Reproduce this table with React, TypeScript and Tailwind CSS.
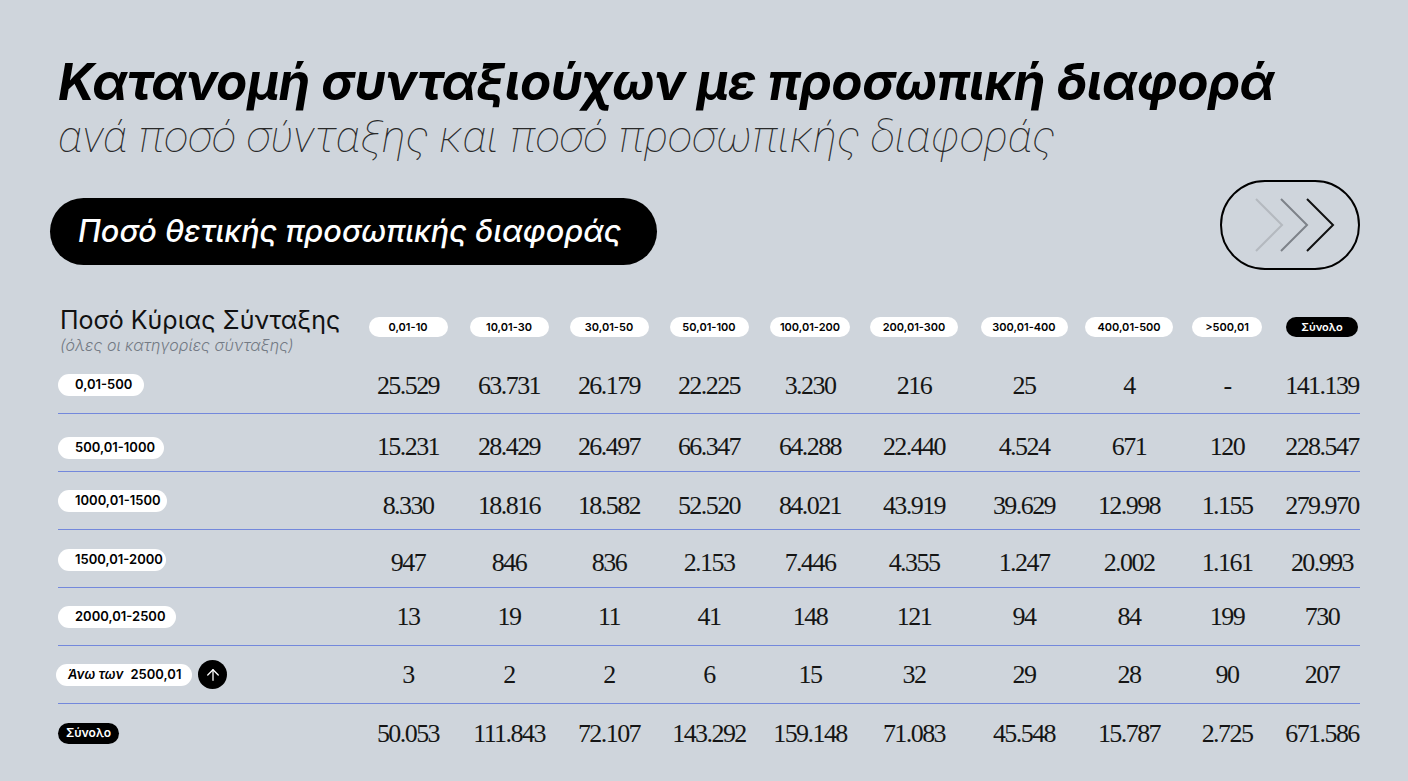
import { ArrowUp } from 'lucide-react';

const cols = ['0,01-10', '10,01-30', '30,01-50', '50,01-100', '100,01-200', '200,01-300', '300,01-400', '400,01-500', '>500,01'];
const colPillW = ['w-[79px]', 'w-[79px]', 'w-[79px]', 'w-[79px]', 'w-[80px]', 'w-[88px]', 'w-[87px]', 'w-[88px]', 'w-[70px]'];

// nudge: some rows in the source sit a few px lower than centre
const rows = [
  { label: '0,01-500', w: 'w-[86px]', nudge: 'pt-[2px]', lnudge: 'pt-0', values: ['25.529', '63.731', '26.179', '22.225', '3.230', '216', '25', '4', '-', '141.139'] },
  { label: '500,01-1000', w: 'w-[106px]', nudge: 'pt-[8px]', lnudge: 'pt-[10px]', values: ['15.231', '28.429', '26.497', '66.347', '64.288', '22.440', '4.524', '671', '120', '228.547'] },
  { label: '1000,01-1500', w: 'w-[109px]', nudge: 'pt-[9px]', lnudge: 'pt-0', values: ['8.330', '18.816', '18.582', '52.520', '84.021', '43.919', '39.629', '12.998', '1.155', '279.970'] },
  { label: '1500,01-2000', w: 'w-[108px]', nudge: 'pt-[7px]', lnudge: 'pt-[3px]', values: ['947', '846', '836', '2.153', '7.446', '4.355', '1.247', '2.002', '1.161', '20.993'] },
  { label: '2000,01-2500', w: 'w-[118px]', nudge: 'pt-0', lnudge: 'pt-0', values: ['13', '19', '11', '41', '148', '121', '94', '84', '199', '730'] },
];

const lastRow = ['3', '2', '2', '6', '15', '32', '29', '28', '90', '207'];
const totals = ['50.053', '111.843', '72.107', '143.292', '159.148', '71.083', '45.548', '15.787', '2.725', '671.586'];

const grid = 'grid grid-cols-[300px_100px_102px_98px_102px_100px_108px_112px_98px_98px_92px]';

function Num({ v, nudge }: { v: string; nudge: string }) {
  return (
    <div className={`${nudge} text-center font-['Liberation_Serif',serif] text-[26px] tracking-[-0.06em] text-[#151515]`}>{v}</div>
  );
}

function Row({ label, values, last, nudge = 'pt-0', lnudge = 'pt-0' }: { label: React.ReactNode; values: string[]; last?: boolean; nudge?: string; lnudge?: string }) {
  return (
    <div className={`${grid} h-[58px] w-[1302px] items-center ${last ? '' : 'border-b border-[#7388dc]'}`}>
      <div className={`${lnudge} flex items-center`}>{label}</div>
      {values.map((v, i) => (
        <Num key={i} v={v} nudge={nudge} />
      ))}
    </div>
  );
}

function LabelPill({ text, w }: { text: string; w: string }) {
  return (
    <span className={`${w} flex h-[22px] items-center rounded-full bg-white pl-[17px] text-[13px] font-semibold text-black`}>
      {text}
    </span>
  );
}

export default function App() {
  return (
    <div className="h-[781px] w-[1408px] overflow-hidden bg-[#cfd5dc] pl-[58px] pt-[54px] font-['Inter','Liberation_Sans',sans-serif] text-black">
      <h1 className="text-[51px] font-bold italic leading-[56px] tracking-[-0.01em]">Κατανομή συνταξιούχων με προσωπική διαφορά</h1>
      <p className="mt-[3px] font-['Roboto',sans-serif] text-[45px] font-thin italic leading-[48px] text-[#2a2a2a]">
        ανά ποσό σύνταξης και ποσό προσωπικής διαφοράς
      </p>

      <div className="mt-[19px] flex w-[1302px] items-start justify-between">
        <div className="ml-[-8px] mt-[18px] flex h-[67px] w-[607px] items-center rounded-full bg-black pl-[28px] text-[30.7px] font-medium italic text-white">
          Ποσό θετικής προσωπικής διαφοράς
        </div>
        <div className="flex h-[90px] w-[140px] items-center justify-center rounded-full border-2 border-black">
          <svg width="100" height="60" viewBox="0 0 100 60" fill="none" strokeWidth="2">
            <polyline points="16,4 42,30 16,56" stroke="#b4b9bf" />
            <polyline points="41,4 67,30 41,56" stroke="#7d8289" />
            <polyline points="67,4 93,30 67,56" stroke="#111" />
          </svg>
        </div>
      </div>

      <div className="mt-[34px] flex flex-col">
        <div className={`${grid} h-[52px] w-[1302px] items-start`}>
          <div className="flex flex-col pl-[2px] pt-[2px]">
            <span className="text-[25px] leading-[28px] text-[#111]">Ποσό Κύριας Σύνταξης</span>
            <span className="mt-[1px] text-[16px] font-light italic leading-[20px] text-[#737a84]">(όλες οι κατηγορίες σύνταξης)</span>
          </div>
          {cols.map((c, i) => (
            <div key={c} className="flex justify-center pt-[13px]">
              <span className={`${colPillW[i]} flex h-[20px] items-center justify-center rounded-full bg-white text-[11px] font-semibold text-black`}>
                {c}
              </span>
            </div>
          ))}
          <div className="flex justify-center pt-[13px]">
            <span className="flex h-[20px] w-[72px] items-center justify-center rounded-full bg-black text-[11px] font-semibold text-white">
              Σύνολο
            </span>
          </div>
        </div>

        {rows.map((r) => (
          <Row key={r.label} label={<LabelPill text={r.label} w={r.w} />} values={r.values} nudge={r.nudge} lnudge={r.lnudge} />
        ))}
        <Row
          label={
            <div className="flex items-center gap-[6px]">
              <span className="ml-[-2px] flex h-[22px] w-[136px] items-center rounded-full bg-white pl-[12px] text-[13px] font-semibold text-black">
                <span className="italic">Άνω των</span>
                <span className="ml-[7px]">2500,01</span>
              </span>
              <span className="flex h-[29px] w-[29px] items-center justify-center rounded-full bg-black text-white">
                <ArrowUp size={18} strokeWidth={1.75} />
              </span>
            </div>
          }
          values={lastRow}
        />
        <Row
          last
          label={
            <span className="flex h-[21px] w-[61px] items-center justify-center rounded-full bg-black text-[12px] font-semibold text-white">
              Σύνολο
            </span>
          }
          values={totals}
        />
      </div>
    </div>
  );
}
